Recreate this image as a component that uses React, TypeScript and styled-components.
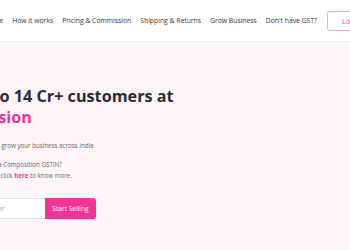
import React from 'react';
import styled, { createGlobalStyle } from 'styled-components';

const GlobalStyle = createGlobalStyle`
  html, body {
    margin: 0;
    padding: 0;
    background: #fdf5f8;
    font-family: 'Open Sans', 'Liberation Sans', sans-serif;
    overflow: hidden;
  }
`;

const Page = styled.div`
  width: 350px;
  height: 250px;
  overflow: hidden;
  background: #fdf5f8;
`;

const Header = styled.header`
  height: 42px;
  background: #fff;
  border-bottom: 1px solid #f3eef0;
  display: flex;
  align-items: center;
  box-sizing: border-box;
  white-space: nowrap;
`;

const Nav = styled.nav`
  display: flex;
  align-items: center;
  gap: 9px;
  margin-left: -16px;
`;

const NavLink = styled.a`
  font-size: 6.8px;
  color: #353543;
  text-decoration: none;
`;

const LoginButton = styled.button`
  margin-left: 10px;
  height: 20px;
  padding: 0 14px;
  border: 1px solid #f9a7cf;
  border-radius: 3px;
  background: #fff;
  color: #f43397;
  font-family: inherit;
  font-size: 7.5px;
  flex-shrink: 0;
`;

const Hero = styled.section`
  margin-left: -95px;
  padding-top: 44px;
  white-space: nowrap;
`;

const Title = styled.h1`
  margin: 0;
  font-size: 16.2px;
  line-height: 21px;
  font-weight: 700;
  color: #2b2b37;
`;

const Pink = styled.span`
  color: #f43397;
`;

const Sub = styled.p`
  margin: 13px 0 0 12px;
  font-size: 6.2px;
  line-height: 9px;
  color: #666;
`;

const Note = styled.p`
  margin: 9px 0 0 13px;
  font-size: 6.2px;
  line-height: 11px;
  color: #666;
`;

const HereLink = styled.a`
  color: #f43397;
  font-weight: 700;
  text-decoration: none;
`;

const Form = styled.div`
  display: flex;
  margin-top: 17px;
  height: 21px;
`;

const Input = styled.input`
  width: 140px;
  box-sizing: border-box;
  border: 1px solid #e4e1e3;
  border-right: none;
  border-radius: 3px 0 0 3px;
  background: #fff;
  padding: 0 0 0 17px;
  font-family: inherit;
  font-size: 6.5px;
  outline: none;
  &::placeholder {
    color: #9a9a9a;
  }
`;

const StartButton = styled.button`
  width: 51px;
  border: none;
  border-radius: 0 3px 3px 0;
  background: #f43397;
  color: #fff;
  font-family: inherit;
  font-size: 6.6px;
  padding: 0;
`;

export default function App() {
  const links = ['Home', 'How it works', 'Pricing & Commission', 'Shipping & Returns', 'Grow Business', "Don't have GST?"];
  return (
    <Page>
      <GlobalStyle />
      <Header>
        <Nav>
          {links.map((l) => (
            <NavLink key={l} href="#">{l}</NavLink>
          ))}
        </Nav>
        <LoginButton>Login</LoginButton>
      </Header>
      <Hero>
        <Title>
          Sell online to 14 Cr+ customers at
          <br />
          <Pink>0% Commission</Pink>
        </Title>
        <Sub>Become a Meesho seller and grow your business across India</Sub>
        <Note>
          Don't have a GSTIN or have a Composition GSTIN?
          <br />
          You can still sell on Meesho, click <HereLink href="#">here</HereLink> to know more.
        </Note>
        <Form>
          <Input placeholder="Enter Your Mobile Number" />
          <StartButton>Start Selling</StartButton>
        </Form>
      </Hero>
    </Page>
  );
}
